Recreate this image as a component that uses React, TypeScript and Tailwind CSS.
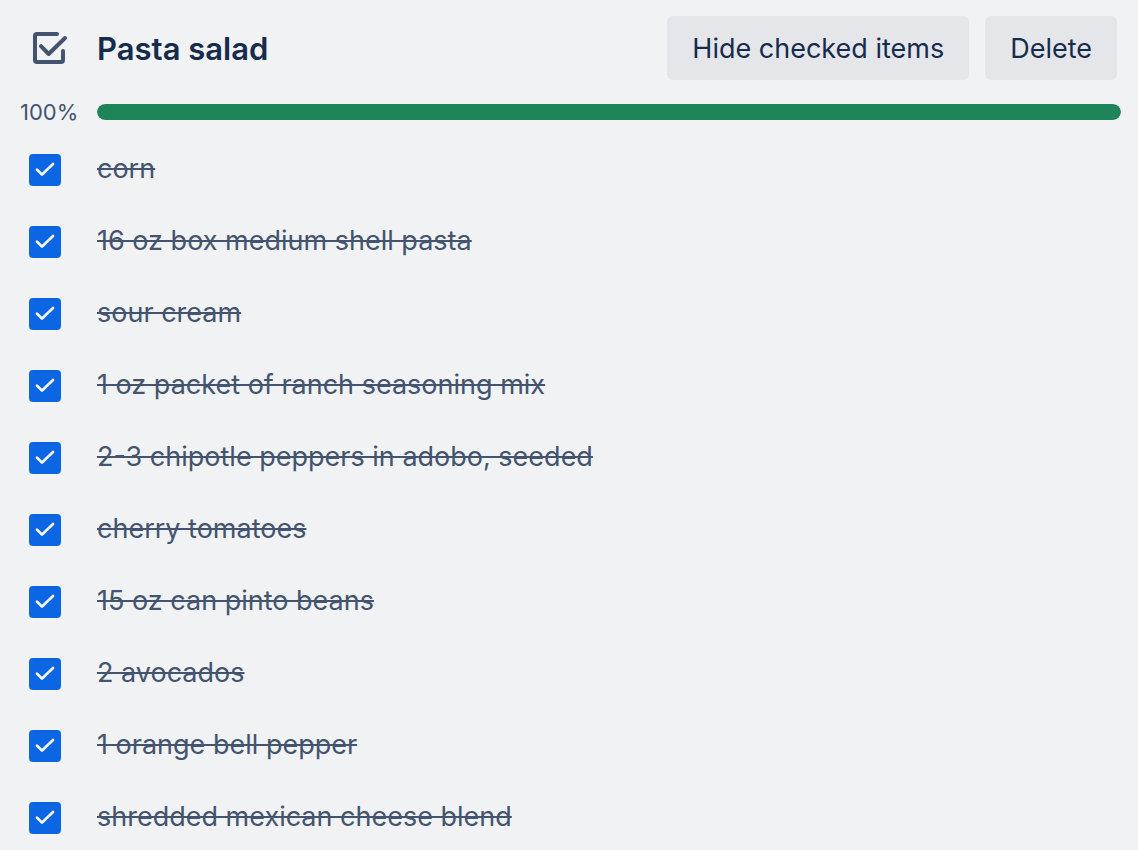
import { useState } from "react";

const INITIAL_ITEMS = [
  "corn",
  "16 oz box medium shell pasta",
  "sour cream",
  "1 oz packet of ranch seasoning mix",
  "2-3 chipotle peppers in adobo, seeded",
  "cherry tomatoes",
  "15 oz can pinto beans",
  "2 avocados",
  "1 orange bell pepper",
  "shredded mexican cheese blend",
].map((label, id) => ({ id, label, checked: true }));

function ChecklistIcon() {
  return (
    <svg
      viewBox="0 0 48 48"
      className="size-12 shrink-0 text-[#44546f]"
      fill="none"
      stroke="currentColor"
      strokeWidth="4"
      strokeLinecap="round"
      strokeLinejoin="round"
      aria-hidden="true"
    >
      <path d="M32 10H12a2 2 0 0 0-2 2v24a2 2 0 0 0 2 2h24a2 2 0 0 0 2-2V27" />
      <path d="M16 22.2l7.7 7.8L40 14" />
    </svg>
  );
}

function Button({ children, onClick }: { children: string; onClick: () => void }) {
  return (
    <button
      type="button"
      onClick={onClick}
      className="h-16 rounded-md bg-[#e4e6ea] px-[25px] pt-0.5 text-[27px] whitespace-nowrap text-[#172b4d]"
    >
      {children}
    </button>
  );
}

type Item = { id: number; label: string; checked: boolean };

function ChecklistRow({ item, onToggle }: { item: Item; onToggle: () => void }) {
  const inputId = `item-${item.id}`;
  return (
    <li className="flex items-start pb-10">
      <div className="flex w-[97px] shrink-0 pl-[29px]">
        <div className="grid size-8">
          <input
            id={inputId}
            type="checkbox"
            checked={item.checked}
            onChange={onToggle}
            className="peer col-start-1 row-start-1 size-8 appearance-none rounded-sm border-2 border-[#8590a2] bg-white checked:border-[#0c66e4] checked:bg-[#0c66e4]"
          />
          <svg
            viewBox="0 0 32 32"
            className="pointer-events-none invisible col-start-1 row-start-1 size-8 peer-checked:visible"
            fill="none"
            stroke="#ffffff"
            strokeWidth="2.7"
            strokeLinecap="round"
            strokeLinejoin="round"
            aria-hidden="true"
          >
            <path d="M8 15.7l5 4.9L24 10" />
          </svg>
        </div>
      </div>
      <label
        htmlFor={inputId}
        className={
          item.checked
            ? "text-[27px] leading-[30px] text-[#44546f] line-through decoration-2"
            : "text-[27px] leading-[30px] text-[#172b4d]"
        }
      >
        {item.label}
      </label>
    </li>
  );
}

export default function App() {
  const [items, setItems] = useState<Item[]>(INITIAL_ITEMS);
  const [hideChecked, setHideChecked] = useState(false);

  const done = items.filter((item) => item.checked).length;
  const percent = items.length ? Math.round((done / items.length) * 100) : 0;
  const visible = hideChecked ? items.filter((item) => !item.checked) : items;

  const toggle = (id: number) =>
    setItems((all) =>
      all.map((item) => (item.id === id ? { ...item, checked: !item.checked } : item)),
    );

  return (
    <main className="h-screen overflow-hidden bg-[#f0f2f4] pt-4 font-['Inter','Liberation_Sans',sans-serif]">
      <header className="flex items-center pr-[21px]">
        <div className="w-[97px] shrink-0 pl-[25px]">
          <ChecklistIcon />
        </div>
        <h1 className="flex-1 pt-0.5 text-[31px] font-semibold text-[#172b4d]">Pasta salad</h1>
        <div className="flex gap-4">
          <Button onClick={() => setHideChecked((hidden) => !hidden)}>
            {hideChecked ? "Show checked items" : "Hide checked items"}
          </Button>
          <Button onClick={() => setItems([])}>Delete</Button>
        </div>
      </header>

      <div className="mt-4 flex h-8 items-center pr-[17px]">
        <span className="w-[97px] shrink-0 pl-5 text-[22px] text-[#44546f]">{percent}%</span>
        <div
          role="progressbar"
          aria-label="Checklist progress"
          aria-valuenow={percent}
          aria-valuemin={0}
          aria-valuemax={100}
          className="h-4 flex-1 overflow-hidden rounded-full bg-[#e0e3e8]"
        >
          <div className="h-full rounded-full bg-[#1f845a]" style={{ width: `${percent}%` }} />
        </div>
      </div>

      <ul className="pt-[26px]">
        {visible.map((item) => (
          <ChecklistRow key={item.id} item={item} onToggle={() => toggle(item.id)} />
        ))}
      </ul>
    </main>
  );
}
